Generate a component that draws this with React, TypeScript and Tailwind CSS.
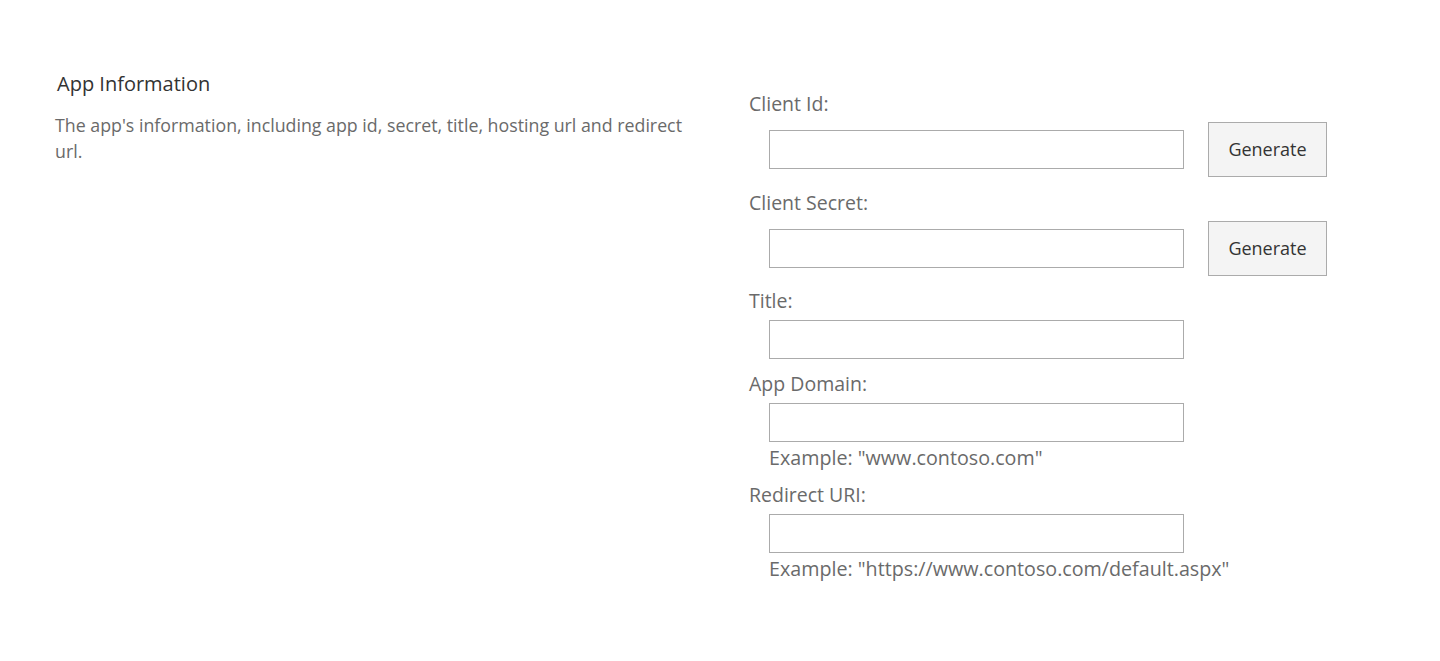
import React from 'react';

function Label({ children }: { children: React.ReactNode }) {
  return <div className="h-[24px] leading-[24px] text-[19.5px] text-[#6a6a6a]">{children}</div>;
}

function TextBox() {
  return <input type="text" className="block w-[415px] h-[39px] border border-[#ababab] bg-white px-2 text-[15px] outline-none" />;
}

function Hint({ children }: { children: React.ReactNode }) {
  return <div className="pl-5 h-[24px] leading-[24px] mt-[4px] text-[19.7px] text-[#6a6a6a]">{children}</div>;
}

function GenerateRow() {
  return (
    <div className="flex items-center mt-[6px]">
      <div className="pl-5">
        <TextBox />
      </div>
      <button className="ml-6 w-[119px] h-[55px] border border-[#ababab] bg-[#f4f4f4] text-[18px] text-[#333333]">
        Generate
      </button>
    </div>
  );
}

function InputRow() {
  return (
    <div className="pl-5 mt-[7px]">
      <TextBox />
    </div>
  );
}

export default function App() {
  return (
    <div className="min-h-screen bg-white font-['Open_Sans',sans-serif]">
      <div className="flex pl-[55px] pt-[72px]">
        <div className="w-[694px] shrink-0">
          <h2 className="pl-[2px] h-[24px] leading-[24px] text-[20px] text-[#333333]">App Information</h2>
          <p className="mt-[16px] w-[650px] text-[17.8px] leading-[26px] text-[#6a6a6a]">
            The app's information, including app id, secret, title, hosting url and redirect url.
          </p>
        </div>

        <div className="pt-[20px]">
          <Label>Client Id:</Label>
          <GenerateRow />

          <div className="mt-[14px]">
            <Label>Client Secret:</Label>
          </div>
          <GenerateRow />

          <div className="mt-[13px]">
            <Label>Title:</Label>
          </div>
          <InputRow />

          <div className="mt-[13px]">
            <Label>App Domain:</Label>
          </div>
          <InputRow />
          <Hint>Example: "www.contoso.com"</Hint>

          <div className="mt-[13px]">
            <Label>Redirect URI:</Label>
          </div>
          <InputRow />
          <Hint>Example: "https://www.contoso.com/default.aspx"</Hint>
        </div>
      </div>
    </div>
  );
}
